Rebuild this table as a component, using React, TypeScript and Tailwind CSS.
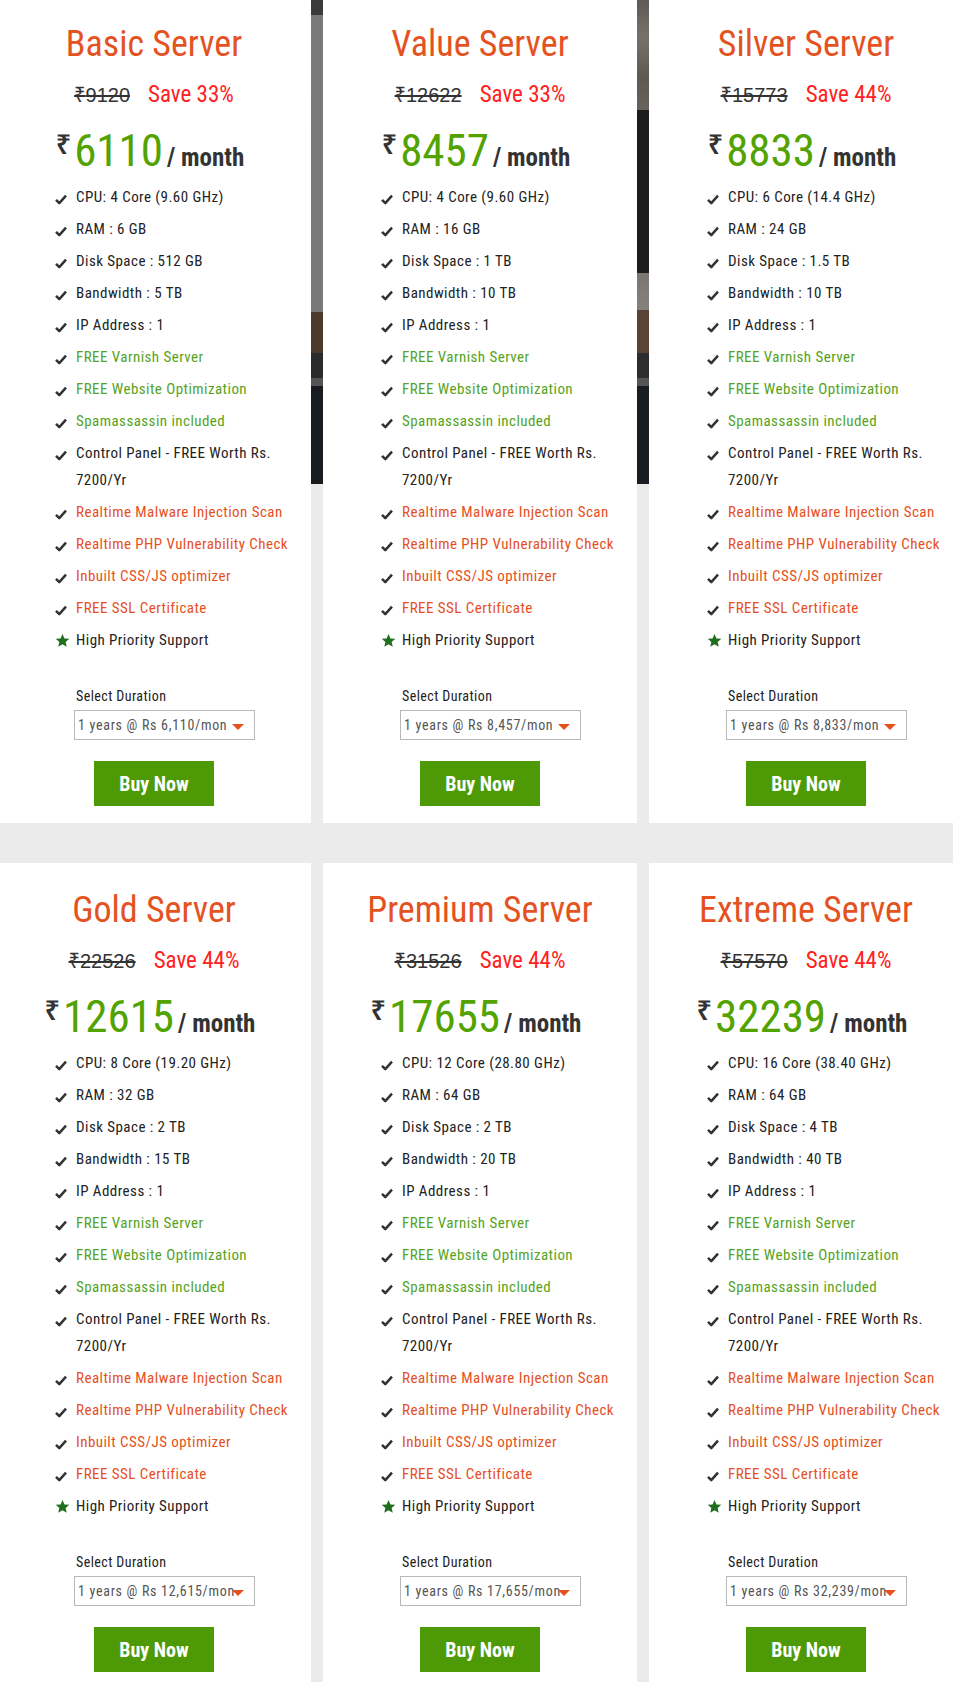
type Plan = {
  name: string
  old: string
  save: number
  price: string
  cpu: string
  ram: string
  disk: string
  bw: string
  dur: string
}

const rowOne: Plan[] = [
  { name: "Basic Server", old: "9120", save: 33, price: "6110", cpu: "CPU: 4 Core (9.60 GHz)", ram: "RAM : 6 GB", disk: "Disk Space : 512 GB", bw: "Bandwidth : 5 TB", dur: "1 years @ Rs 6,110/mon" },
  { name: "Value Server", old: "12622", save: 33, price: "8457", cpu: "CPU: 4 Core (9.60 GHz)", ram: "RAM : 16 GB", disk: "Disk Space : 1 TB", bw: "Bandwidth : 10 TB", dur: "1 years @ Rs 8,457/mon" },
  { name: "Silver Server", old: "15773", save: 44, price: "8833", cpu: "CPU: 6 Core (14.4 GHz)", ram: "RAM : 24 GB", disk: "Disk Space : 1.5 TB", bw: "Bandwidth : 10 TB", dur: "1 years @ Rs 8,833/mon" },
]

const rowTwo: Plan[] = [
  { name: "Gold Server", old: "22526", save: 44, price: "12615", cpu: "CPU: 8 Core (19.20 GHz)", ram: "RAM : 32 GB", disk: "Disk Space : 2 TB", bw: "Bandwidth : 15 TB", dur: "1 years @ Rs 12,615/mon" },
  { name: "Premium Server", old: "31526", save: 44, price: "17655", cpu: "CPU: 12 Core (28.80 GHz)", ram: "RAM : 64 GB", disk: "Disk Space : 2 TB", bw: "Bandwidth : 20 TB", dur: "1 years @ Rs 17,655/mon" },
  { name: "Extreme Server", old: "57570", save: 44, price: "32239", cpu: "CPU: 16 Core (38.40 GHz)", ram: "RAM : 64 GB", disk: "Disk Space : 4 TB", bw: "Bandwidth : 40 TB", dur: "1 years @ Rs 32,239/mon" },
]

type Tone = "dark" | "green" | "orange"

const extras: { text: string; tone: Tone; star?: boolean }[] = [
  { text: "IP Address : 1", tone: "dark" },
  { text: "FREE Varnish Server", tone: "green" },
  { text: "FREE Website Optimization", tone: "green" },
  { text: "Spamassassin included", tone: "green" },
  { text: "Control Panel - FREE Worth Rs. 7200/Yr", tone: "dark" },
  { text: "Realtime Malware Injection Scan", tone: "orange" },
  { text: "Realtime PHP Vulnerability Check", tone: "orange" },
  { text: "Inbuilt CSS/JS optimizer", tone: "orange" },
  { text: "FREE SSL Certificate", tone: "orange" },
  { text: "High Priority Support", tone: "dark", star: true },
]

const toneClass: Record<Tone, string> = {
  dark: "text-[#222]",
  green: "text-[#55a31c]",
  orange: "text-[#e5501c]",
}

function Check() {
  return (
    <svg width="12" height="11" viewBox="0 0 12 11" className="mt-[3px]">
      <path d="M1 5.8 L4.3 9.2 L11 1.6" fill="none" stroke="#333" strokeWidth="2.5" strokeLinejoin="round" />
    </svg>
  )
}

function Star() {
  return (
    <svg width="15" height="15" viewBox="0 0 24 24">
      <path d="M12 1.5l3.1 7.2 7.8.6-5.9 5.1 1.8 7.6L12 17.9 5.2 22l1.8-7.6L1.1 9.3l7.8-.6z" fill="#1f6f1f" />
    </svg>
  )
}

function Card({ plan }: { plan: Plan }) {
  const items = [
    { text: plan.cpu, tone: "dark" as Tone, star: false },
    { text: plan.ram, tone: "dark" as Tone, star: false },
    { text: plan.disk, tone: "dark" as Tone, star: false },
    { text: plan.bw, tone: "dark" as Tone, star: false },
    ...extras,
  ]
  return (
    <div className="w-[314px] shrink-0 bg-white pt-[25px] pb-[17px] font-['Roboto_Condensed',Roboto,sans-serif]">
      <h2 className="text-center text-[36px] leading-[44px] text-[#e4531f]">{plan.name}</h2>

      <div className="mt-[12px] flex h-[30px] items-baseline justify-center gap-[18px]">
        <span className="font-['Liberation_Sans','Noto_Sans',sans-serif] text-[20px] text-[#333] line-through">
          ₹{plan.old}
        </span>
        <span className="text-[23px] text-[#ff2121]">Save {plan.save}%</span>
      </div>

      <div className="mt-[20px] flex h-[46px] items-baseline justify-center pr-2">
        <span className="mt-[2px] mr-[3px] self-start font-['Noto_Sans',sans-serif] text-[27px] leading-none font-semibold text-[#333]">₹</span>
        <span className="text-[45px] leading-[46px] text-[#52a300]">{plan.price}</span>
        <span className="ml-[4px] text-[25px] font-bold text-[#333]">/ month</span>
      </div>

      <ul className="mt-[10px] pr-[10px] pl-[58px] text-[15px] tracking-[0.03em]">
        {items.map((it) => (
          <li key={it.text} className="mb-[5px] flex leading-[27px]">
            <span className="flex h-[27px] w-[21px] shrink-0 items-center">{it.star ? <Star /> : <Check />}</span>
            <span className={toneClass[it.tone]}>{it.text}</span>
          </li>
        ))}
      </ul>

      <div className="mt-[32px] pl-[77px]">
        <p className="pl-[2px] text-[14px] leading-[20px] tracking-[0.03em] text-[#222]">Select Duration</p>
        <div className="relative mt-[4px] flex h-[30px] w-[181px] items-center overflow-hidden border border-[#b8b8b8] pl-[3px] text-[14px] tracking-[0.05em] whitespace-nowrap text-[#555]">
          {plan.dur}
          <span className="absolute top-[13px] right-[10px] h-0 w-0 border-x-[6px] border-t-[6px] border-x-transparent border-t-[#e5501c]" />
        </div>
      </div>

      <div className="mt-[21px] flex justify-center">
        <button className="h-[45px] w-[120px] bg-[#4e9a06] text-[20px] font-bold text-white">Buy Now</button>
      </div>
    </div>
  )
}

function Gutter({ photo }: { photo: string }) {
  return (
    <div className="w-[12px] shrink-0 self-stretch bg-[#ebebeb]">
      <div className={`h-[487px] ${photo}`} />
    </div>
  )
}

export default function App() {
  return (
    <div className="h-[1682px] w-[953px] overflow-hidden bg-[#ebebeb]">
      <div className="-mt-[3px] -ml-[3px] flex w-max flex-col gap-[40px]">
        <div className="flex">
          <Card plan={rowOne[0]} />
          <Gutter photo="bg-[linear-gradient(to_bottom,#3c3b3a_0px,#3c3b3a_18px,#7b7a79_18px,#7a7978_315px,#4d3a2d_315px,#4d3a2d_356px,#2b2b2b_356px,#2b2b2b_381px,#555_381px,#555_389px,#181b1f_389px,#181b1f_487px)]" />
          <Card plan={rowOne[1]} />
          <Gutter photo="bg-[linear-gradient(to_bottom,#5d5853_0px,#77716b_40px,#5e5a52_80px,#66625d_113px,#1d1d1d_113px,#1d1d1d_276px,#7a7672_276px,#85827e_313px,#5a4336_313px,#5a4336_356px,#2d2d2f_356px,#2d2d2f_381px,#555_381px,#555_389px,#191c20_389px,#191c20_487px)]" />
          <Card plan={rowOne[2]} />
        </div>
        <div className="flex gap-[12px]">
          {rowTwo.map((p) => (
            <Card key={p.name} plan={p} />
          ))}
        </div>
      </div>
    </div>
  )
}
